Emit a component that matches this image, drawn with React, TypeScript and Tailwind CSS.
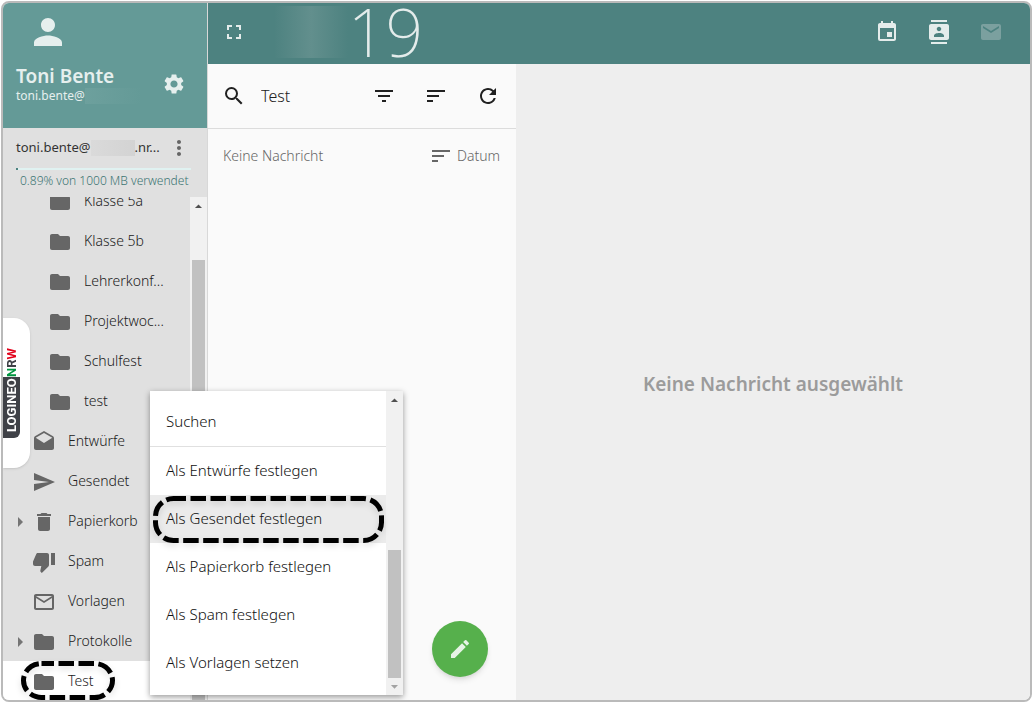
import { useState } from "react";
import type { IconType } from "react-icons";
import {
    MdArrowDropDown,
    MdArrowDropUp,
    MdArrowRight,
    MdContacts,
    MdDelete,
    MdDrafts,
    MdEdit,
    MdEmail,
    MdEvent,
    MdFilterList,
    MdFolder,
    MdFullscreen,
    MdMailOutline,
    MdMoreVert,
    MdPerson,
    MdRefresh,
    MdSearch,
    MdSend,
    MdSettings,
    MdSort,
    MdThumbDown,
} from "react-icons/md";

type Folder = {
    name: string;
    icon: IconType;
    child?: boolean;
    expandable?: boolean;
};

const folders: Folder[] = [
    { name: "Klasse 5a", icon: MdFolder, child: true },
    { name: "Klasse 5b", icon: MdFolder, child: true },
    { name: "Lehrerkonf...", icon: MdFolder, child: true },
    { name: "Projektwoc...", icon: MdFolder, child: true },
    { name: "Schulfest", icon: MdFolder, child: true },
    { name: "test", icon: MdFolder, child: true },
    { name: "Entwürfe", icon: MdDrafts },
    { name: "Gesendet", icon: MdSend },
    { name: "Papierkorb", icon: MdDelete, expandable: true },
    { name: "Spam", icon: MdThumbDown },
    { name: "Vorlagen", icon: MdMailOutline },
    { name: "Protokolle", icon: MdFolder, expandable: true },
    { name: "Test", icon: MdFolder },
];

const menuItems = [
    "Als Entwürfe festlegen",
    "Als Gesendet festlegen",
    "Als Papierkorb festlegen",
    "Als Spam festlegen",
    "Als Vorlagen setzen",
];

// dashed marker drawn around an entry
function Marker({ className, width, height }: { className: string; width: number; height: number }) {
    return (
        <svg
            aria-hidden="true"
            width={width}
            height={height}
            className={`pointer-events-none absolute overflow-visible drop-shadow-md ${className}`}
        >
            <rect
                x="2.5"
                y="2.5"
                width={width - 5}
                height={height - 5}
                rx="18"
                fill="none"
                stroke="#000"
                strokeWidth="5"
                strokeDasharray="15.5 4.5"
                strokeDashoffset="3"
            />
        </svg>
    );
}

function LogineoTab() {
    return (
        <a
            href="#logineo"
            className="absolute top-[315px] left-0 flex h-[150px] w-[27px] flex-col rounded-r-2xl bg-white pt-7 font-['Roboto',sans-serif] text-[13px] leading-[17px] font-bold shadow"
        >
            <span className="h-[31px] w-[17px] rotate-180 [writing-mode:vertical-rl]">
                <span className="text-[#009640]">N</span>
                <span className="text-[#3f4147]">R</span>
                <span className="text-[#e2001a]">W</span>
            </span>
            <span className="h-[61px] w-[17px] rotate-180 rounded-tl-md bg-[#3f4147] pt-1.5 text-white [writing-mode:vertical-rl]">
                LOGINEO
            </span>
        </a>
    );
}

function Sidebar() {
    const [selected, setSelected] = useState("Test");

    return (
        <aside className="flex w-[205px] shrink-0 flex-col border-r border-[#d8d8d8] bg-[#e0e0e0]">
            <div className="flex h-[125px] shrink-0 items-end justify-between bg-[#649a97] pr-[21px] pb-6 pl-[13px] text-[#e6efee]">
                <div>
                    <MdPerson className="ml-[11px] size-[42px]" />
                    <h1 className="mt-[11px] text-[19px] leading-6 font-semibold">Toni Bente</h1>
                    <p className="flex items-center text-[12px] leading-4">
                        toni.bente@
                        <span className="h-4 w-14 bg-linear-to-r from-[#6da09d] to-[#649a97]" />
                    </p>
                </div>
                <button aria-label="Einstellungen" className="mb-2">
                    <MdSettings className="size-6" />
                </button>
            </div>

            <div className="h-[69px] shrink-0 pt-2 pl-[13px]">
                <div className="flex h-6 items-center text-[13px] text-[#333]">
                    toni.bente@
                    <span className="h-4 w-11 bg-linear-to-r from-[#dadada] to-[#d3d3d3]" />
                    <span className="grow">.nr...</span>
                    <button aria-label="Mehr" className="mr-4 text-[#666]">
                        <MdMoreVert className="size-6" />
                    </button>
                </div>
                <div className="mt-2 mr-4 h-0.5 bg-[#e0f2f1]">
                    <div className="h-0.5 bg-[#4d8280]" style={{ width: "0.89%" }} />
                </div>
                <p className="pt-px pl-1 text-[12px] leading-5 font-light text-[#3b7472]">0.89% von 1000 MB verwendet</p>
            </div>

            <div className="flex min-h-0 grow">
                <nav className="min-w-0 grow overflow-hidden">
                    <ul className="-mt-4">
                        {folders.map((folder) => (
                            <li key={folder.name} className={folder.name === selected ? "bg-white" : ""}>
                                <button
                                    onClick={() => setSelected(folder.name)}
                                    className={`relative flex h-10 w-full items-center pb-0.5 text-[14px] font-light text-[#212121] ${folder.child ? "pl-[21px]" : "pl-[5px]"}`}
                                >
                                    <span className="w-6 text-[#757575]">
                                        {folder.expandable && <MdArrowRight className="mt-1 size-6" />}
                                    </span>
                                    <folder.icon className="mt-1 size-6 text-[#666]" />
                                    <span className="pl-3 whitespace-nowrap">{folder.name}</span>
                                    {folder.name === selected && (
                                        <Marker className="top-0 left-[18px]" width={94} height={39} />
                                    )}
                                </button>
                            </li>
                        ))}
                    </ul>
                </nav>
                <div className="flex w-[17px] shrink-0 flex-col items-center bg-[#f1f1f1] text-[#505050]">
                    <MdArrowDropUp className="mt-px size-[17px]" />
                    <div className="mt-[45px] w-[13px] grow bg-[#c1c1c1]" />
                </div>
            </div>
        </aside>
    );
}

function MessageList() {
    return (
        <section className="relative w-[308px] shrink-0 bg-[#fafafa]">
            <div className="flex h-[65px] items-center border-b border-[#dcdcdc] pr-4 pl-3.5 text-[#212121]">
                <label htmlFor="search" aria-label="Suche">
                    <MdSearch className="size-6" />
                </label>
                <input
                    id="search"
                    defaultValue="Test"
                    className="ml-[15px] min-w-0 grow bg-transparent text-[16px] font-light outline-none"
                />
                <div className="flex gap-7">
                    <button aria-label="Filtern">
                        <MdFilterList className="size-6" />
                    </button>
                    <button aria-label="Sortieren">
                        <MdSort className="size-6" />
                    </button>
                    <button aria-label="Aktualisieren">
                        <MdRefresh className="size-6" />
                    </button>
                </div>
            </div>
            <div className="flex h-[53px] items-center justify-between pr-4 pl-[15px] text-[14px] font-light text-[#666]">
                <span>Keine Nachricht</span>
                <button className="flex items-center gap-1">
                    <MdSort className="size-6" />
                    Datum
                </button>
            </div>
            <button
                aria-label="Neue Nachricht"
                className="absolute right-7 bottom-[23px] flex size-14 items-center justify-center rounded-full bg-[#56b04c] text-[#e6f3e5] shadow-md"
            >
                <MdEdit className="size-6" />
            </button>
        </section>
    );
}

function FolderMenu() {
    return (
        <div className="absolute bottom-[5px] left-[147px] flex h-[304px] w-[253px] bg-white shadow-[0_2px_6px_rgba(0,0,0,0.4)]">
            <div className="grow pt-[7px] text-[15px] font-light text-[#111]" role="menu">
                <button role="menuitem" className="block h-[49px] w-full border-b border-[#e0e0e0] pb-0.5 pl-4 text-left">
                    Suchen
                </button>
                {menuItems.map((item) => (
                    <button
                        key={item}
                        role="menuitem"
                        className={`relative block h-12 w-full pb-0.5 pl-4 text-left ${item === "Als Gesendet festlegen" ? "bg-[#ebebeb]" : ""}`}
                    >
                        {item}
                        {item === "Als Gesendet festlegen" && (
                            <Marker className="top-px left-[3px]" width={231} height={47} />
                        )}
                    </button>
                ))}
            </div>
            <div className="flex w-[17px] flex-col items-center bg-[#f1f1f1]">
                <MdArrowDropUp className="mt-px size-[17px] text-[#505050]" />
                <div className="mt-auto h-32 w-[13px] bg-[#c1c1c1]" />
                <MdArrowDropDown className="size-[17px] text-[#a3a3a3]" />
            </div>
        </div>
    );
}

export default function App() {
    return (
        <div className="h-screen bg-white p-px font-['Noto_Sans',sans-serif]">
            <div className="relative flex h-full overflow-hidden rounded-lg border-2 border-[#bababa]">
                <Sidebar />
                <div className="flex min-w-0 grow flex-col">
                    <header className="flex h-[61px] shrink-0 items-center bg-[#4d8280] pr-[27px] pb-1 pl-3.5 text-[#e4eceb]">
                        <button aria-label="Vollbild">
                            <MdFullscreen className="size-6" />
                        </button>
                        <div className="ml-7 h-[52px] w-[74px] bg-linear-to-r from-[#4d8280] via-[#628f8d] to-[#4d8280]" />
                        <div className="text-[66px] leading-[55px] font-extralight">19</div>
                        <div className="ml-auto flex gap-7">
                            <button aria-label="Kalender">
                                <MdEvent className="size-6" />
                            </button>
                            <button aria-label="Kontakte">
                                <MdContacts className="size-6" />
                            </button>
                            <button aria-label="E-Mail" disabled className="text-[#7ba09f]">
                                <MdEmail className="size-6" />
                            </button>
                        </div>
                    </header>
                    <div className="flex min-h-0 grow">
                        <MessageList />
                        <main className="flex grow items-center justify-center bg-[#eee] pt-1">
                            <p className="text-[19px] font-semibold text-[#9b9b9b]">Keine Nachricht ausgewählt</p>
                        </main>
                    </div>
                </div>
                <LogineoTab />
                <FolderMenu />
            </div>
        </div>
    );
}
